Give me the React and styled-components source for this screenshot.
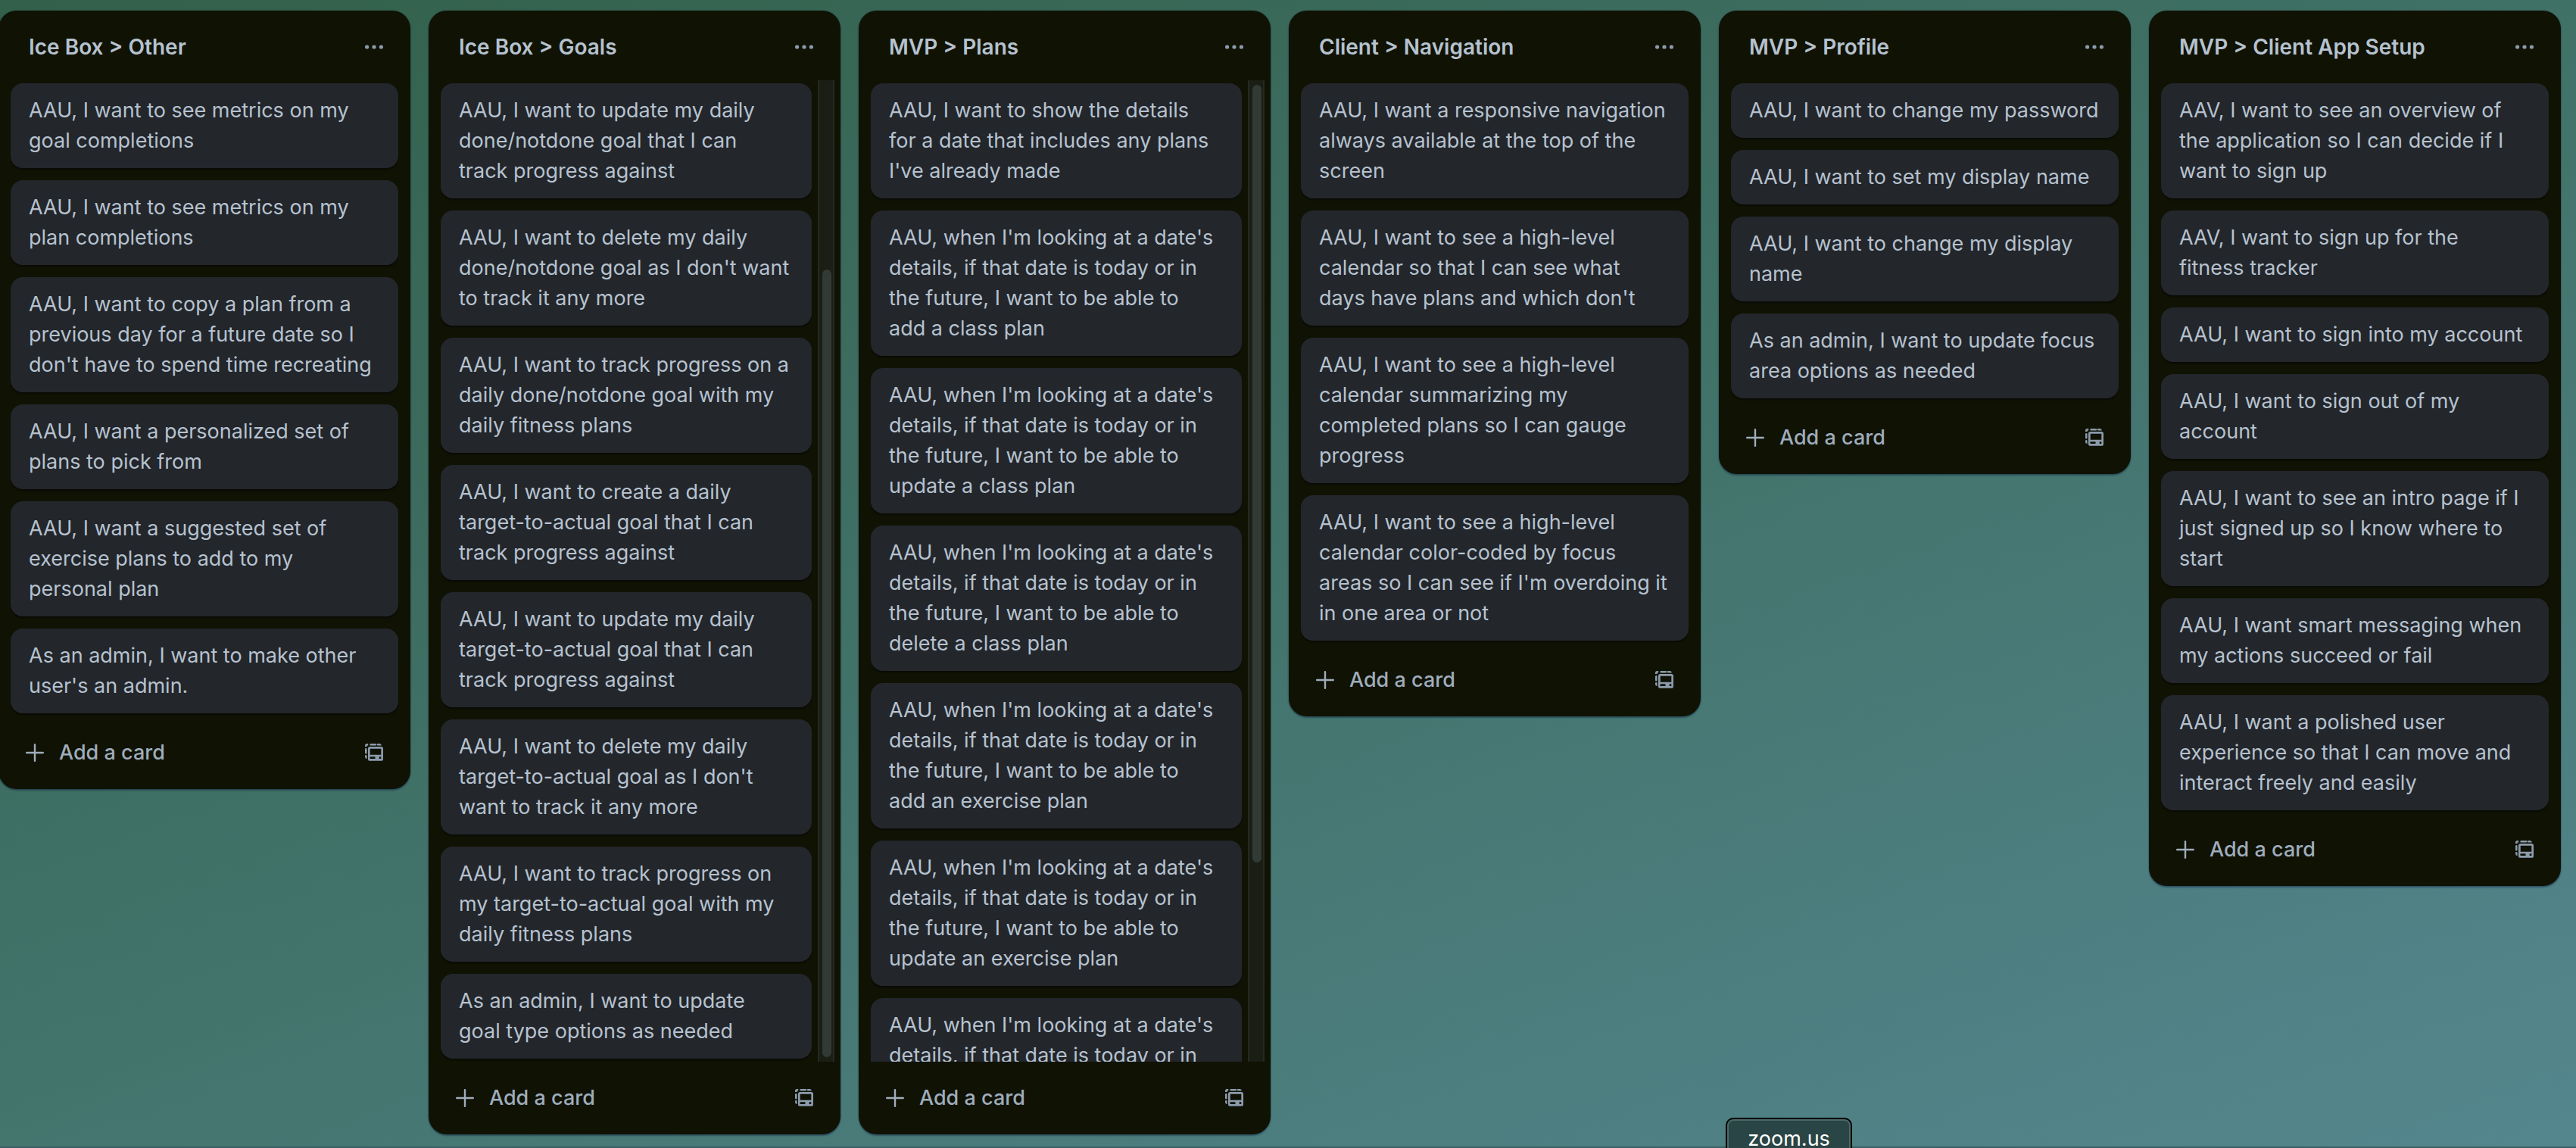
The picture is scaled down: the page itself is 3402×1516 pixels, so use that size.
import React from "react";
import styled, { createGlobalStyle } from "styled-components";

const GlobalStyle = createGlobalStyle`
  *, *::before, *::after { box-sizing: border-box; }
  body { margin: 0; overflow: hidden; }
`;

const Board = styled.main`
  height: 100vh;
  padding: 14px 0 16px;
  overflow: hidden;
  border-bottom: 2px solid #3a6065;
  background: linear-gradient(160deg, #32604a 0%, #42736a 50%, #4d7f81 80%, #54868e 100%);
  color: #b6c2cf;
  font-family: Inter, "Liberation Sans", sans-serif;
  font-size: 27px;
  line-height: 40px;
`;

const Lists = styled.ol`
  display: flex;
  align-items: flex-start;
  gap: 24px;
  height: 100%;
  margin: 0 0 0 -2px;
  padding: 0;
  list-style: none;
`;

const List = styled.li`
  display: flex;
  flex: 0 0 544px;
  flex-direction: column;
  max-height: 100%;
  border-radius: 24px;
  background: #101204;
  box-shadow: 0 2px 2px rgba(9, 30, 66, 0.4), 0 0 2px rgba(9, 30, 66, 0.4);
`;

const ListHeader = styled.header`
  display: flex;
  flex: none;
  align-items: center;
  justify-content: space-between;
  height: 92px;
  padding: 4px 36px 0 40px;
`;

const ListTitle = styled.h2`
  margin: 0;
  font-size: 28px;
  font-weight: 600;
  line-height: 40px;
`;

const IconButton = styled.button`
  display: flex;
  padding: 0;
  border: 0;
  background: none;
  color: #8c9bab;
`;

const ListBody = styled.div`
  display: flex;
  min-height: 0;
  gap: 8px;
  padding: 0 ${(p) => (p.$scrolls ? 8 : 16)}px 0 16px;
`;

const Cards = styled.ol`
  display: flex;
  flex: 1;
  flex-direction: column;
  gap: 16px;
  min-width: 0;
  margin: 0;
  padding: 4px 0;
  overflow: hidden;
  list-style: none;
`;

const Card = styled.li`
  flex: none;
  padding: 16px 20px 16px 24px;
  border-radius: 16px;
  background: #23262b;
  box-shadow: 0 2px 2px rgba(3, 4, 4, 0.5);
  white-space: pre-line;
`;

const ScrollTrack = styled.div`
  display: flex;
  flex: none;
  flex-direction: column;
  justify-content: ${(p) => (p.$atEnd ? "flex-end" : "flex-start")};
  width: 22px;
  padding: 6px 2px 6px 4px;
  border: solid #252a20;
  border-width: 0 2px;
  background: #1b1e14;
`;

const ScrollThumb = styled.div`
  width: 12px;
  border-radius: 6px;
  background: #323a35;
`;

const ListFooter = styled.footer`
  display: flex;
  flex: none;
  align-items: center;
  justify-content: space-between;
  height: 96px;
  padding: 0 36px;
`;

const AddButton = styled.button`
  display: flex;
  align-items: center;
  gap: 20px;
  padding: 0;
  border: 0;
  background: none;
  color: #9fadbc;
  font: inherit;
  font-weight: 500;
`;

const DockLabel = styled.div`
  position: fixed;
  bottom: -14px;
  left: 67%;
  padding: 6px 27px 4px;
  border: 2px solid #000;
  border-radius: 10px;
  box-shadow: inset 0 0 0 2px #4c6967;
  background: #294545;
  color: #fff;
  font-family: Inter, "Liberation Sans", sans-serif;
  font-size: 27px;
  line-height: 40px;
`;

const MoreIcon = () => (
  <svg width="24" height="24" viewBox="0 0 24 24" fill="currentColor" aria-hidden="true">
    <circle cx="2.6" cy="12" r="2.6" />
    <circle cx="12" cy="12" r="2.6" />
    <circle cx="21.4" cy="12" r="2.6" />
  </svg>
);

const PlusIcon = () => (
  <svg width="24" height="24" viewBox="0 0 24 24" fill="none" stroke="currentColor" strokeWidth="2.4" strokeLinecap="round" aria-hidden="true">
    <path d="M12 1.2v21.6M1.2 12h21.6" />
  </svg>
);

const TemplateIcon = () => (
  <svg width="24" height="24" viewBox="0 0 24 24" fill="currentColor" aria-hidden="true">
    <path
      fillRule="evenodd"
      d="M6.6 4h14.8A2.6 2.6 0 0 1 24 6.6v13.6a2.6 2.6 0 0 1-2.6 2.6H6.6A2.6 2.6 0 0 1 4 20.200V6.600A2.6 2.6 0 0 1 6.600 4ZM6.700 6.700V14.700H21.300V6.700ZM7.600 17.300a1.300 1.300 0 0 0 0 2.700h4.800a1.300 1.300 0 0 0 0-2.700ZM18.700 17.300V20H21.300V17.300Z"
    />
    <path d="M0 4V2.600A2.600 2.600 0 0 1 2.600 0H4.200V2.600H2.700V4ZM7.600 0h6.400a1 1 0 0 1 0 2.600H7.600a1 1 0 0 1 0-2.600ZM17 0h2.400a2.600 2.600 0 0 1 2.400 2.600H17a1 1 0 0 1 0-2.600ZM0 7.400a1 1 0 0 1 2.600 0v4.800a1 1 0 0 1-2.600 0ZM0 16.400a1 1 0 0 1 2.600 0V20A2.600 2.600 0 0 1 0 17.800Z" />
  </svg>
);

const lists = [
  {
    title: "Ice Box > Other",
    cards: [
      "AAU, I want to see metrics on my\ngoal completions",
      "AAU, I want to see metrics on my\nplan completions",
      "AAU, I want to copy a plan from a\nprevious day for a future date so I\ndon't have to spend time recreating",
      "AAU, I want a personalized set of\nplans to pick from",
      "AAU, I want a suggested set of\nexercise plans to add to my\npersonal plan",
      "As an admin, I want to make other\nuser's an admin.",
    ],
  },
  {
    title: "Ice Box > Goals",
    scroll: { atEnd: true, size: 81 },
    cards: [
      "AAU, I want to update my daily\ndone/notdone goal that I can\ntrack progress against",
      "AAU, I want to delete my daily\ndone/notdone goal as I don't want\nto track it any more",
      "AAU, I want to track progress on a\ndaily done/notdone goal with my\ndaily fitness plans",
      "AAU, I want to create a daily\ntarget-to-actual goal that I can\ntrack progress against",
      "AAU, I want to update my daily\ntarget-to-actual goal that I can\ntrack progress against",
      "AAU, I want to delete my daily\ntarget-to-actual goal as I don't\nwant to track it any more",
      "AAU, I want to track progress on\nmy target-to-actual goal with my\ndaily fitness plans",
      "As an admin, I want to update\ngoal type options as needed",
    ],
  },
  {
    title: "MVP > Plans",
    scroll: { atEnd: false, size: 80 },
    cards: [
      "AAU, I want to show the details\nfor a date that includes any plans\nI've already made",
      "AAU, when I'm looking at a date's\ndetails, if that date is today or in\nthe future, I want to be able to\nadd a class plan",
      "AAU, when I'm looking at a date's\ndetails, if that date is today or in\nthe future, I want to be able to\nupdate a class plan",
      "AAU, when I'm looking at a date's\ndetails, if that date is today or in\nthe future, I want to be able to\ndelete a class plan",
      "AAU, when I'm looking at a date's\ndetails, if that date is today or in\nthe future, I want to be able to\nadd an exercise plan",
      "AAU, when I'm looking at a date's\ndetails, if that date is today or in\nthe future, I want to be able to\nupdate an exercise plan",
      "AAU, when I'm looking at a date's\ndetails, if that date is today or in",
    ],
  },
  {
    title: "Client > Navigation",
    cards: [
      "AAU, I want a responsive navigation\nalways available at the top of the\nscreen",
      "AAU, I want to see a high-level\ncalendar so that I can see what\ndays have plans and which don't",
      "AAU, I want to see a high-level\ncalendar summarizing my\ncompleted plans so I can gauge\nprogress",
      "AAU, I want to see a high-level\ncalendar color-coded by focus\nareas so I can see if I'm overdoing it\nin one area or not",
    ],
  },
  {
    title: "MVP > Profile",
    cards: [
      "AAU, I want to change my password",
      "AAU, I want to set my display name",
      "AAU, I want to change my display\nname",
      "As an admin, I want to update focus\narea options as needed",
    ],
  },
  {
    title: "MVP > Client App Setup",
    cards: [
      "AAV, I want to see an overview of\nthe application so I can decide if I\nwant to sign up",
      "AAV, I want to sign up for the\nfitness tracker",
      "AAU, I want to sign into my account",
      "AAU, I want to sign out of my\naccount",
      "AAU, I want to see an intro page if I\njust signed up so I know where to\nstart",
      "AAU, I want smart messaging when\nmy actions succeed or fail",
      "AAU, I want a polished user\nexperience so that I can move and\ninteract freely and easily",
    ],
  },
];

const BoardList = ({ title, cards, scroll }) => (
  <List>
    <ListHeader>
      <ListTitle>{title}</ListTitle>
      <IconButton type="button" aria-label="List actions">
        <MoreIcon />
      </IconButton>
    </ListHeader>
    <ListBody $scrolls={Boolean(scroll)}>
      <Cards>
        {cards.map((text) => (
          <Card key={text}>{text}</Card>
        ))}
      </Cards>
      {scroll && (
        <ScrollTrack $atEnd={scroll.atEnd}>
          <ScrollThumb style={{ height: `${scroll.size}%` }} />
        </ScrollTrack>
      )}
    </ListBody>
    <ListFooter>
      <AddButton type="button">
        <PlusIcon />
        Add a card
      </AddButton>
      <IconButton type="button" aria-label="Create from template">
        <TemplateIcon />
      </IconButton>
    </ListFooter>
  </List>
);

export default function App() {
  return (
    <>
      <GlobalStyle />
      <Board>
        <Lists>
          {lists.map((list) => (
            <BoardList key={list.title} {...list} />
          ))}
        </Lists>
      </Board>
      <DockLabel>zoom.us</DockLabel>
    </>
  );
}
